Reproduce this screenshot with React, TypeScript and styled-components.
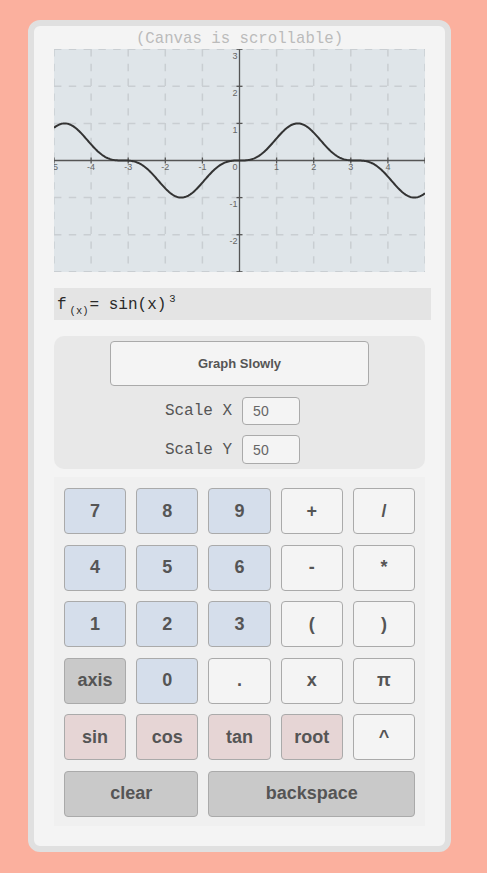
import styled, { createGlobalStyle } from "styled-components";

const GlobalStyle = createGlobalStyle`
  html, body {
    margin: 0;
    padding: 0;
    background: #fbb09e;
  }
  body {
    font-family: "Liberation Sans", Arial, sans-serif;
  }
`;

const Page = styled.div`
  padding: 20px 0 0 28px;
`;

const Card = styled.div`
  box-sizing: border-box;
  width: 423px;
  height: 832px;
  border: 6px solid #e0e0e0;
  border-radius: 12px;
  background: #f4f4f4;
  padding: 0 20px 20px 20px;
  display: flex;
  flex-direction: column;
`;

const CanvasNote = styled.div`
  padding-top: 4px;
  height: 19px;
  line-height: 19px;
  text-align: center;
  font-family: "Liberation Mono", "Courier New", monospace;
  font-size: 15.7px;
  color: #bbbbbb;
`;

const GraphBox = styled.div`
  width: 371px;
  height: 223px;
  background: #dfe5e9;
  overflow: hidden;
`;

const Formula = styled.div`
  margin-top: 16px;
  margin-right: -6px;
  height: 32px;
  padding-left: 3px;
  background: #e4e4e4;
  font-family: "Liberation Mono", "Courier New", monospace;
  font-size: 16px;
  line-height: 34px;
  color: #2a2a2a;
  white-space: pre;
`;

const Sub = styled.sub`
  font-size: 10.5px;
  vertical-align: -5px;
  line-height: 0;
  margin: 0 1px 0 3px;
`;

const Sup = styled.sup`
  font-size: 10.5px;
  vertical-align: 7px;
  line-height: 0;
  margin-left: 3px;
`;

const Controls = styled.div`
  margin-top: 16px;
  height: 133px;
  box-sizing: border-box;
  border-radius: 10px;
  background: #e8e8e8;
  padding-top: 5px;
  display: flex;
  flex-direction: column;
  align-items: center;
  gap: 10px;
`;

const SlowButton = styled.button`
  width: 259px;
  height: 45px;
  border: 1px solid #aaaaaa;
  border-radius: 4px;
  background: #f4f4f4;
  font-family: "Liberation Sans", Arial, sans-serif;
  font-weight: bold;
  font-size: 13px;
  color: #555;
  margin-bottom: 1px;
`;

const ScaleRow = styled.label`
  display: flex;
  align-items: center;
  gap: 10px;
  margin-right: 14px;
  font-family: "Liberation Mono", "Courier New", monospace;
  font-size: 16px;
  color: #555;
`;

const ScaleInput = styled.input`
  box-sizing: border-box;
  width: 58px;
  height: ${(p) => (p.name === "sy" ? 29 : 28)}px;
  border: 1px solid #aaaaaa;
  border-radius: 4px;
  background: #f4f4f4;
  padding: 0 0 0 10px;
  font-family: "Liberation Sans", Arial, sans-serif;
  font-size: 14px;
  color: #666;
`;

const Keypad = styled.div`
  margin-top: 8px;
  height: 349px;
  box-sizing: border-box;
  background: #f0f0f0;
  padding: 11px 10px 0 10px;
  display: grid;
  grid-template-columns: repeat(5, 1fr);
  grid-auto-rows: 46px;
  column-gap: 10px;
  row-gap: 10.5px;
`;

type Tone = "num" | "op" | "fn" | "util";

const toneColors: Record<Tone, string> = {
  num: "#d5deeb",
  op: "#f4f4f4",
  fn: "#e6d5d5",
  util: "#c9c9c9",
};

const Key = styled.button<{ $tone: Tone; $span?: number }>`
  grid-column: span ${(p) => p.$span ?? 1};
  border: 1px solid #aaaaaa;
  border-radius: 4px;
  background: ${(p) => toneColors[p.$tone]};
  font-family: "Liberation Sans", Arial, sans-serif;
  font-weight: bold;
  font-size: 18px;
  color: #555;
  padding: 0;
`;

const keys: { label: string; tone: Tone; span?: number }[] = [
  { label: "7", tone: "num" },
  { label: "8", tone: "num" },
  { label: "9", tone: "num" },
  { label: "+", tone: "op" },
  { label: "/", tone: "op" },
  { label: "4", tone: "num" },
  { label: "5", tone: "num" },
  { label: "6", tone: "num" },
  { label: "-", tone: "op" },
  { label: "*", tone: "op" },
  { label: "1", tone: "num" },
  { label: "2", tone: "num" },
  { label: "3", tone: "num" },
  { label: "(", tone: "op" },
  { label: ")", tone: "op" },
  { label: "axis", tone: "util" },
  { label: "0", tone: "num" },
  { label: ".", tone: "op" },
  { label: "x", tone: "op" },
  { label: "π", tone: "op" },
  { label: "sin", tone: "fn" },
  { label: "cos", tone: "fn" },
  { label: "tan", tone: "fn" },
  { label: "root", tone: "fn" },
  { label: "^", tone: "op" },
  { label: "clear", tone: "util", span: 2 },
  { label: "backspace", tone: "util", span: 3 },
];

const W = 371;
const H = 223;
const U = 37.1;
const OX = 185.5;
const OY = 111.5;

function Graph() {
  const pts: string[] = [];
  for (let i = 0; i <= 400; i++) {
    const x = -5 + i * 0.025;
    const y = Math.pow(Math.sin(x), 3);
    pts.push(`${(OX + x * U).toFixed(2)},${(OY - y * U).toFixed(2)}`);
  }
  const xs = [-5, -4, -3, -2, -1, 1, 2, 3, 4, 5];
  const ys = [-3, -2, -1, 1, 2, 3];
  return (
    <svg width={W} height={H} viewBox={`0 0 ${W} ${H}`}>
      <g stroke="#c9ced2" strokeWidth={1.5} strokeDasharray="7.4 7.4">
        {xs.map((k) => (
          <line key={`v${k}`} x1={OX + k * U} y1={0} x2={OX + k * U} y2={H} />
        ))}
        {ys.map((k) => (
          <line key={`h${k}`} x1={0} y1={OY - k * U} x2={W} y2={OY - k * U} />
        ))}
      </g>
      <g stroke="#555" strokeWidth={1.3}>
        <line x1={0} y1={OY} x2={W} y2={OY} />
        <line x1={OX} y1={0} x2={OX} y2={H} />
        {xs.map((k) => (
          <line key={`tx${k}`} x1={OX + k * U} y1={OY - 3} x2={OX + k * U} y2={OY + 3} />
        ))}
        {ys.map((k) => (
          <line key={`ty${k}`} x1={OX - 3} y1={OY - k * U} x2={OX + 3} y2={OY - k * U} />
        ))}
      </g>
      <g fill="#666" fontFamily="Liberation Sans, Arial, sans-serif" fontSize={9}>
        {[-5, -4, -3, -2, -1, 1, 2, 3, 4].map((k) => (
          <text key={`lx${k}`} x={OX + k * U} y={OY + 9.5} textAnchor="middle">
            {k}
          </text>
        ))}
        <text x={OX - 2} y={OY + 9.5} textAnchor="end">
          0
        </text>
        {[3, 2, 1, -1, -2].map((k) => (
          <text key={`ly${k}`} x={OX - 2} y={OY - k * U + 9.5} textAnchor="end">
            {k}
          </text>
        ))}
      </g>
      <polyline points={pts.join(" ")} fill="none" stroke="#333" strokeWidth={2} />
    </svg>
  );
}

export default function App() {
  return (
    <>
      <GlobalStyle />
      <Page>
        <Card>
          <CanvasNote>(Canvas is scrollable)</CanvasNote>
          <GraphBox>
            <Graph />
          </GraphBox>
          <Formula>
            f<Sub>(x)</Sub>
            {"= sin(x)"}
            <Sup>3</Sup>
          </Formula>
          <Controls>
            <SlowButton>Graph Slowly</SlowButton>
            <ScaleRow>
              Scale X
              <ScaleInput name="sx" defaultValue="50" />
            </ScaleRow>
            <ScaleRow>
              Scale Y
              <ScaleInput name="sy" defaultValue="50" />
            </ScaleRow>
          </Controls>
          <Keypad>
            {keys.map((k) => (
              <Key key={k.label} $tone={k.tone} $span={k.span}>
                {k.label}
              </Key>
            ))}
          </Keypad>
        </Card>
      </Page>
    </>
  );
}
